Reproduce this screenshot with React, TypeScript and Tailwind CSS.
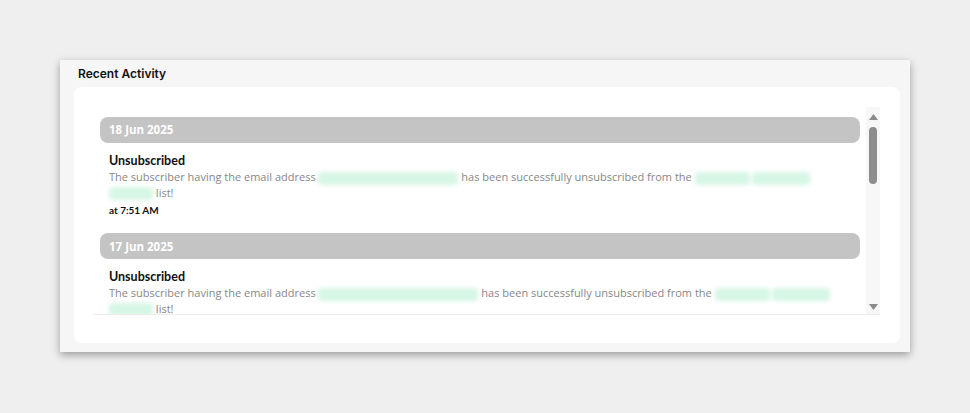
function Blob({ w }: { w: number }) {
  return (
    <span
      className="inline-block h-[13px] align-middle bg-[#d6f6e6] blur-[2px] rounded-sm"
      style={{ width: w }}
    />
  );
}

function Entry({ date, emailW, listW, time }: any) {
  return (
    <div>
      <div className="h-[26px] bg-[#c4c4c4] rounded-lg flex items-center pl-[9px] text-white font-bold text-[11.5px] font-['Open_Sans',sans-serif]">
        {date}
      </div>
      <div className="pl-[9px] mt-[10px]">
        <p className="text-[12.5px] leading-[16px] font-bold text-[#111] font-['Lato',sans-serif]">
          Unsubscribed
        </p>
        <p className="text-[11px] leading-[15px] text-[#878787] font-['Open_Sans',sans-serif]">
          The subscriber having the email address <Blob w={emailW} /> has been
          successfully unsubscribed from the <Blob w={listW[0]} /> <Blob w={listW[1]} />
          <br />
          <Blob w={44} /> list!
        </p>
        {time && (
          <p className="mt-[2px] text-[10px] leading-[16px] font-bold text-[#111] font-['Lato',sans-serif]">
            {time}
          </p>
        )}
      </div>
    </div>
  );
}

export default function App() {
  return (
    <div className="w-[970px] h-[413px] bg-[#efefef] pt-[60px] pl-[60px]">
      <div className="w-[850px] h-[292px] bg-[#f6f6f6] shadow-[0_3px_8px_rgba(0,0,0,0.35)] pl-[14px] pr-[10px] pt-[6px]">
        <h2 className="pl-[4px] text-[12px] leading-[16px] font-semibold text-[#111] font-['Inter',sans-serif]">
          Recent Activity
        </h2>
        <div className="mt-[5px] h-[256px] bg-white rounded-lg pl-[19px] pr-[20px] pt-[20px]">
          <div className="flex h-[208px] border-b border-[#ececec]">
            <div className="flex-1 overflow-hidden pl-[7px] pt-[10px] pr-[6px]">
              <div className="flex flex-col gap-[15px]">
                <Entry date="18 Jun 2025" emailW={140} listW={[55, 58]} time="at 7:51 AM" />
                <Entry date="17 Jun 2025" emailW={160} listW={[55, 58]} />
              </div>
            </div>
            <div className="w-[14px] bg-[#f7f7f7] flex flex-col items-center pt-[7px] pb-[4px]">
              <svg width="9" height="6" viewBox="0 0 9 6">
                <path d="M4.5 0L9 6H0Z" fill="#8a8a8a" />
              </svg>
              <div className="mt-[7px] w-[8px] h-[57px] rounded-full bg-[#8d8d8d]" />
              <div className="flex-1" />
              <svg width="9" height="6" viewBox="0 0 9 6">
                <path d="M0 0H9L4.5 6Z" fill="#8a8a8a" />
              </svg>
            </div>
          </div>
        </div>
      </div>
    </div>
  );
}
